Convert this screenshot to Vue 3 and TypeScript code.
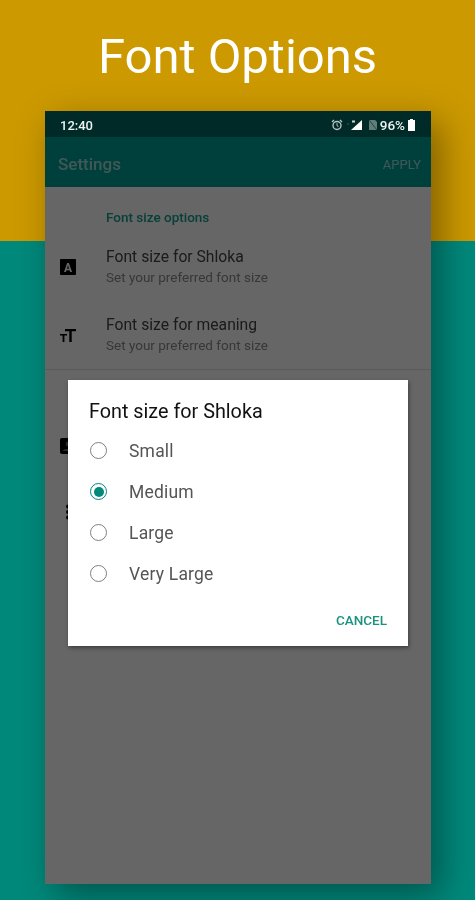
<script setup lang="ts">
const rows = [
  { title: 'Font size for Shloka', sub: 'Set your preferred font size', icon: 'a' },
  { title: 'Font size for meaning', sub: 'Set your preferred font size', icon: 't' },
]
const options = ['Small', 'Medium', 'Large', 'Very Large']
const selected = 'Medium'
</script>

<template>
  <div class="page">
    <h1 class="headline">Font Options</h1>
    <div class="phone">
      <div class="status">
        <span class="time">12:40</span>
        <div class="status-icons">
          <svg width="12" height="12" viewBox="0 0 12 12" class="alarm">
            <circle cx="6" cy="6.5" r="4" fill="none" stroke="#b9c4c3" stroke-width="1.4" />
            <path d="M6 4.2V6.7L7.5 7.6" fill="none" stroke="#b9c4c3" stroke-width="1" />
            <path d="M1 3L3 1M11 3L9 1" stroke="#b9c4c3" stroke-width="1.3" />
          </svg>
          <svg width="16" height="12" viewBox="0 0 16 12" class="signal">
            <circle cx="1" cy="5" r=".6" fill="#7f9693" />
            <path d="M15 1V11H4Z" fill="#fff" />
            <path d="M5 1.5h3v2H5z" fill="#cfd8d7" />
          </svg>
          <svg width="10" height="12" viewBox="0 0 10 12" class="sim">
            <path d="M1 1H7L9 3V11H1Z" fill="#5f7d79" />
            <path d="M1 1L9 11" stroke="#2a4745" stroke-width="1" />
          </svg>
          <span class="battery-text">96%</span>
          <svg width="7" height="12" viewBox="0 0 7 12" class="battery">
            <path d="M2 0H5V1H7V12H0V1H2Z" fill="#fff" />
          </svg>
        </div>
      </div>

      <div class="screen">
        <div class="toolbar">
          <span class="toolbar-title">Settings</span>
          <span class="apply">APPLY</span>
        </div>
        <div class="content">
          <div class="section">Font size options</div>
          <div v-for="row in rows" :key="row.title" class="row">
            <div class="row-icon">
              <svg v-if="row.icon === 'a'" width="18" height="18" viewBox="0 0 18 18">
                <rect x="1" y="1" width="16" height="16" rx="1" fill="#000" />
                <text x="9" y="14" text-anchor="middle" class="icon-letter">A</text>
              </svg>
              <svg v-else width="18" height="18" viewBox="0 0 18 18">
                <path d="M6 3H17V5.2H12.7V16H10.3V5.2H6Z" fill="#000" />
                <path d="M1 8H8V9.6H5.4V16H3.6V9.6H1Z" fill="#000" />
              </svg>
            </div>
            <div class="row-text">
              <div class="row-title">{{ row.title }}</div>
              <div class="row-sub">{{ row.sub }}</div>
            </div>
          </div>
          <div class="divider"></div>
          <div class="section-gap"></div>
          <div class="row lower">
            <div class="row-icon">
              <svg width="18" height="18" viewBox="0 0 18 18">
                <rect x="1" y="1" width="16" height="16" rx="2" fill="#000" />
                <circle cx="9" cy="7" r="2.4" fill="#666" />
                <path d="M4 14c0-3 10-3 10 0z" fill="#666" />
              </svg>
            </div>
          </div>
          <div class="row lower">
            <div class="row-icon">
              <svg width="18" height="18" viewBox="0 0 18 18">
                <circle cx="9" cy="3.5" r="2" fill="#000" />
                <circle cx="9" cy="9" r="2" fill="#000" />
                <circle cx="9" cy="14.500" r="2" fill="#000" />
              </svg>
            </div>
          </div>
        </div>
        <div class="scrim"></div>
      </div>

      <div class="dialog">
        <div class="dialog-title">Font size for Shloka</div>
        <div class="options">
          <div v-for="opt in options" :key="opt" class="option">
            <span class="radio" :class="{ on: opt === selected }"></span>
            <span class="option-label">{{ opt }}</span>
          </div>
        </div>
        <div class="actions"><span class="cancel">CANCEL</span></div>
      </div>
    </div>
  </div>
</template>

<style>
html, body { margin: 0; padding: 0; }
</style>

<style scoped>
.page {
  width: 475px;
  height: 900px;
  overflow: hidden;
  box-sizing: border-box;
  padding-top: 27px;
  background: linear-gradient(to bottom, #cc9900 0 241px, #00897b 241px 100%);
  font-family: Roboto, "Noto Sans", sans-serif;
  filter: blur(0.4px);
}
.headline {
  margin: 0;
  height: 84px;
  line-height: 60px;
  text-align: center;
  color: #fff;
  font-size: 49px;
  font-weight: 400;
}
.phone {
  position: relative;
  margin-left: 45px;
  width: 386px;
  height: 773px;
  display: flex;
  flex-direction: column;
  box-shadow: 10px 12px 34px rgba(0, 0, 0, 0.38);
}
.status {
  height: 26px;
  flex: none;
  box-sizing: border-box;
  padding: 2px 16px 0 15px;
  background: #002a28;
  display: flex;
  align-items: center;
  justify-content: space-between;
  color: #eef3f2;
  font-size: 13px;
  font-weight: 500;
}
.status-icons { display: flex; align-items: center; }
.alarm { margin-right: 4px; }
.signal { margin-right: 5px; }
.sim { margin-right: 2px; }
.battery-text { margin-right: 3px; font-size: 13.500px; font-weight: 500; }
.screen {
  position: relative;
  flex: 1;
  background: #fff;
  display: flex;
  flex-direction: column;
}
.scrim {
  position: absolute;
  inset: 0;
  background: rgba(0, 0, 0, 0.6);
}
.toolbar {
  height: 50px;
  flex: none;
  box-sizing: border-box;
  padding: 4px 10px 0 13px;
  background: #00a096;
  display: flex;
  align-items: center;
  justify-content: space-between;
  color: #fff;
}
.toolbar-title { font-size: 17px; font-weight: 500; opacity: 0.62; }
.apply { font-size: 13px; font-weight: 400; opacity: 0.62; }
.content { flex: 1; }
.section {
  height: 46px;
  box-sizing: border-box;
  padding: 23px 0 0 61px;
  line-height: 15px;
  font-size: 13.500px;
  font-weight: 500;
  color: #12a08e;
}
.row {
  height: 68px;
  display: flex;
  align-items: center;
}
.row-icon {
  width: 61px;
  flex: none;
  display: flex;
  padding-left: 14px;
  box-sizing: border-box;
}
.row-title { font-size: 15.700px; line-height: 20px; color: #444; }
.row-sub { font-size: 13.500px; line-height: 20px; color: #8a8a8a; }
.divider { height: 1px; background: #e0e0e0; }
.section-gap { height: 43px; }
.lower { height: 66px; }
.icon-letter { fill: #fff; font-size: 12px; font-weight: 700; font-family: Roboto, sans-serif; }
.dialog {
  position: absolute;
  left: 23px;
  top: 269px;
  width: 340px;
  height: 266px;
  background: #fff;
  box-shadow: 1px 2px 4px rgba(0, 0, 0, 0.4);
  display: flex;
  flex-direction: column;
}
.dialog-title {
  padding: 21px 0 0 21px;
  height: 29px;
  line-height: 22px;
  font-size: 19.800px;
  font-weight: 400;
  color: #111;
}
.options { display: flex; flex-direction: column; }
.option {
  height: 41px;
  display: flex;
  align-items: center;
  padding-left: 22px;
}
.radio {
  width: 17px;
  height: 17px;
  box-sizing: border-box;
  border: 1.500px solid #808080;
  border-radius: 50%;
  margin-right: 22px;
  position: relative;
}
.radio.on { border-color: #00897b; }
.radio.on::after {
  content: "";
  position: absolute;
  inset: 2.500px;
  border-radius: 50%;
  background: #00897b;
}
.option-label { font-size: 17.500px; color: #555; letter-spacing: 0.2px; }
.actions {
  margin-top: auto;
  height: 39px;
  display: flex;
  justify-content: flex-end;
  padding-right: 21px;
}
.cancel {
  font-size: 13.500px;
  font-weight: 500;
  line-height: 27px;
  color: #1b917f;
}
</style>
